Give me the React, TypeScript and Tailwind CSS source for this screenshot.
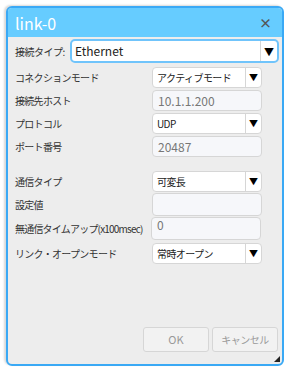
import React from "react";

const font = { fontFamily: '"Noto Sans CJK JP", "Noto Sans", sans-serif' };

function Select({ value }: { value: string }) {
  return (
    <div className="flex h-[21px] w-[110px] items-stretch rounded-[4px] border border-[#d6d6d6] bg-white">
      <span className="flex-1 truncate whitespace-nowrap pl-[4px] text-[10px] leading-[19px] tracking-[-0.6px] text-[#222]">{value}</span>
      <span className="flex w-[16px] items-center justify-center border-l border-[#d6d6d6] text-[9px] text-black">▼</span>
    </div>
  );
}

function Input({ value, h }: { value: string; h: "s" | "m" | "t" }) {
  const size = h === "s" ? "h-[21px] leading-[19px]" : h === "m" ? "h-[23px] leading-[21px]" : "h-[23px] leading-[14px]";
  return (
    <div className={"w-[110px] rounded-[4px] border border-[#d6d6d6] bg-[#f6f7fa] pl-[5px] text-[12px] text-[#777] " + size}>
      {value}
    </div>
  );
}

function Row({ label, children }: { label: string; children: React.ReactNode }) {
  return (
    <div className="flex items-center">
      <span className="w-[137px] shrink-0 whitespace-nowrap text-[10px] tracking-[-0.7px] text-[#333]">{label}</span>
      {children}
    </div>
  );
}

export default function App() {
  return (
    <div className="h-[371px] w-[294px] bg-white pl-[6px] pt-[6px]" style={font}>
      <div className="flex h-[360px] w-[278px] flex-col overflow-hidden rounded-[6px] border-2 border-[#3aa9f5] bg-[#ededed] shadow-[-2px_-1px_2px_rgba(0,0,0,0.15)]">
        {/* Title bar */}
        <div className="flex h-[29px] shrink-0 items-center justify-between bg-[#66ccff] pl-[7px] pr-[10px]">
          <span className="text-[16px] text-white">link-0</span>
          <span className="text-[13px] font-bold text-[#555]">×</span>
        </div>

        <div className="flex flex-1 flex-col pl-[7px] pr-[3px] pt-[2px]">
          {/* 接続タイプ */}
          <div className="flex items-center">
            <span className="w-[55px] shrink-0 whitespace-nowrap text-[10px] tracking-[-0.5px] text-[#333]">接続タイプ:</span>
            <div className="flex h-[24px] w-[209px] items-stretch rounded-[5px] border-2 border-[#70c4fb] bg-white">
              <span className="flex-1 pl-[3px] text-[12px] leading-[20px] text-[#222]">Ethernet</span>
              <span className="flex w-[17px] items-center justify-center border-l border-[#d6d6d6] text-[10px] text-black">▼</span>
            </div>
          </div>

          <div className="mt-[4px] flex flex-col gap-[2px]">
            <Row label="コネクションモード"><Select value="アクティブモード" /></Row>
            <Row label="接続先ホスト"><Input value="10.1.1.200" h="s" /></Row>
            <Row label="プロトコル"><Select value="UDP" /></Row>
            <Row label="ポート番号"><Input value="20487" h="s" /></Row>
          </div>

          <div className="mt-[14px] flex flex-col gap-[1px]">
            <Row label="通信タイプ"><Select value="可変長" /></Row>
            <Row label="設定値"><Input value="" h="m" /></Row>
            <div className="flex items-center">
              <span className="w-[135px] shrink-0 whitespace-nowrap text-[10px] tracking-[-0.8px] text-[#333]">無通信タイムアップ(x100msec)</span>
              <div className="ml-[1px]"><Input value="0" h="t" /></div>
            </div>
            <div className="mt-[2px]">
              <Row label="リンク・オープンモード"><Select value="常時オープン" /></Row>
            </div>
          </div>

          <div className="flex-1" />

          <div className="flex justify-end gap-[3px] pb-[12px] pr-[1px]">
            <button className="h-[25px] w-[66px] rounded-[3px] border border-[#d6d6d6] bg-[#f2f2f2] text-[11px] text-[#999]">OK</button>
            <button className="h-[25px] w-[66px] rounded-[3px] border border-[#d6d6d6] bg-[#f2f2f2] text-[10px] tracking-[-0.5px] text-[#999]">キャンセル</button>
          </div>
        </div>
        <div className="relative h-0">
          <svg className="absolute bottom-[2px] right-[2px]" width="6" height="6" viewBox="0 0 6 6">
            <polygon points="6,0 6,6 0,6" fill="#222" />
          </svg>
        </div>
      </div>
    </div>
  );
}
